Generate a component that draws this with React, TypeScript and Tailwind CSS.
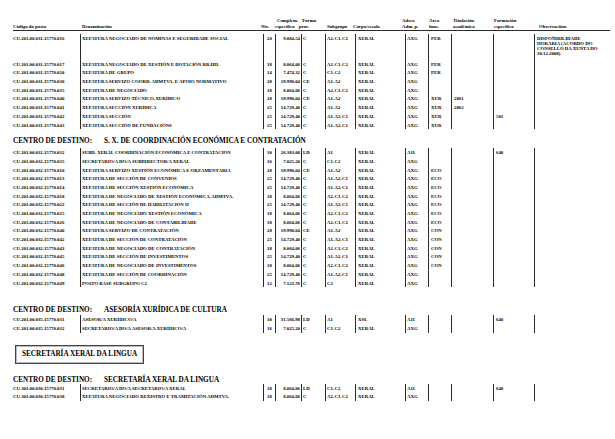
type Row = {
  code: string
  name: string
  niv: string
  comp: string
  forma: string
  sub: string
  corpo: string
  adscr: string
  area?: string
  tit?: string
  form?: string
  obs?: string[]
}

const block1: Row[] = [
  { code: "CU.201.00.031.15770.016", name: "XEFATURA NEGOCIADO DE NÓMINAS E SEGURIDADE SOCIAL", niv: "20", comp: "9.084,54", forma: "C", sub: "A2-C1-C2", corpo: "XERAL", adscr: "AXG", area: "PER", obs: ["DISPOÑIBILIDADE", "HORARIA (ACORDO DO", "CONSELLO DA XUNTA DO", "30.12.2008)."] },
  { code: "CU.201.00.031.15770.017", name: "XEFATURA NEGOCIADO DE XESTIÓN E DOTACIÓN RR.HH.", niv: "18", comp: "8.064,06", forma: "C", sub: "A2-C1-C2", corpo: "XERAL", adscr: "AXG", area: "PER" },
  { code: "CU.201.00.031.15770.020", name: "XEFATURA DE GRUPO", niv: "14", comp: "7.474,32", forma: "C", sub: "C1-C2", corpo: "XERAL", adscr: "AXG", area: "PER" },
  { code: "CU.201.00.031.15770.030", name: "XEFATURA SERVIZO COORD. ADMTVA. E APOIO NORMATIVO", niv: "28", comp: "19.990,04", forma: "CE", sub: "A1-A2", corpo: "XERAL", adscr: "AXG" },
  { code: "CU.201.00.031.15770.035", name: "XEFATURA DE NEGOCIADO", niv: "18", comp: "8.064,06", forma: "C", sub: "A2-C1-C2", corpo: "XERAL", adscr: "AXG" },
  { code: "CU.201.00.031.15770.040", name: "XEFATURA SERVIZO TÉCNICO-XURÍDICO", niv: "28", comp: "19.990,04", forma: "CE", sub: "A1-A2", corpo: "XERAL", adscr: "AXG", area: "XUR", tit: "2061" },
  { code: "CU.201.00.031.15770.041", name: "XEFATURA SECCIÓN XURÍDICA", niv: "25", comp: "14.729,40", forma: "C", sub: "A1-A2", corpo: "XERAL", adscr: "AXG", area: "XUR", tit: "2062" },
  { code: "CU.201.00.031.15770.042", name: "XEFATURA SECCIÓN", niv: "25", comp: "14.729,40", forma: "C", sub: "A1-A2-C1", corpo: "XERAL", adscr: "AXG", area: "XUR", form: "501" },
  { code: "CU.201.00.031.15770.043", name: "XEFATURA SECCIÓN DE FUNDACIÓNS", niv: "25", comp: "14.729,40", forma: "C", sub: "A1-A2-C1", corpo: "XERAL", adscr: "AXG", area: "XUR" },
]

const block2: Row[] = [
  { code: "CU.201.00.032.15770.032", name: "SUBD. XERAL COORDINACIÓN ECONÓMICA E CONTRATACIÓN", niv: "30", comp: "26.383,08", forma: "LD", sub: "A1", corpo: "XERAL", adscr: "A11", form: "640" },
  { code: "CU.201.00.032.15770.035", name: "SECRETARIO/A DO/A SUBDIRECTOR/A XERAL", niv: "16", comp: "7.025,20", forma: "C", sub: "C1-C2", corpo: "XERAL", adscr: "AXG" },
  { code: "CU.201.00.032.15770.010", name: "XEFATURA SERVIZO XESTIÓN ECONÓMICA E ORZAMENTARIA", niv: "28", comp: "19.990,04", forma: "CE", sub: "A1-A2", corpo: "XERAL", adscr: "AXG", area: "ECO" },
  { code: "CU.201.00.032.15770.013", name: "XEFATURA DE SECCIÓN DE CONVENIOS", niv: "25", comp: "14.729,40", forma: "C", sub: "A1-A2-C1", corpo: "XERAL", adscr: "AXG", area: "ECO" },
  { code: "CU.201.00.032.15770.014", name: "XEFATURA DE SECCIÓN XESTIÓN ECONÓMICA", niv: "25", comp: "14.729,40", forma: "C", sub: "A1-A2-C1", corpo: "XERAL", adscr: "AXG", area: "ECO" },
  { code: "CU.201.00.032.15770.018", name: "XEFATURA DE NEGOCIADO DE XESTIÓN ECONÓMICA-ADMTVA.", niv: "18", comp: "8.064,06", forma: "C", sub: "A2-C1-C2", corpo: "XERAL", adscr: "AXG", area: "ECO" },
  { code: "CU.201.00.032.15770.022", name: "XEFATURA DE SECCIÓN DE HABILITACIÓN II", niv: "25", comp: "14.729,40", forma: "C", sub: "A1-A2-C1", corpo: "XERAL", adscr: "AXG", area: "ECO" },
  { code: "CU.201.00.032.15770.025", name: "XEFATURA DE NEGOCIADO XESTIÓN ECONÓMICA", niv: "18", comp: "8.064,06", forma: "C", sub: "A2-C1-C2", corpo: "XERAL", adscr: "AXG", area: "ECO" },
  { code: "CU.201.00.032.15770.026", name: "XEFATURA DE NEGOCIADO DE CONTABILIDADE", niv: "18", comp: "8.064,06", forma: "C", sub: "A2-C1-C2", corpo: "XERAL", adscr: "AXG", area: "ECO" },
  { code: "CU.201.00.032.15770.040", name: "XEFATURA SERVIZO DE CONTRATACIÓN", niv: "28", comp: "19.990,04", forma: "CE", sub: "A1-A2", corpo: "XERAL", adscr: "AXG", area: "CON" },
  { code: "CU.201.00.032.15770.042", name: "XEFATURA DE SECCIÓN DE CONTRATACIÓN", niv: "25", comp: "14.729,40", forma: "C", sub: "A1-A2-C1", corpo: "XERAL", adscr: "AXG", area: "CON" },
  { code: "CU.201.00.032.15770.043", name: "XEFATURA DE NEGOCIADO DE CONTRATACIÓN", niv: "18", comp: "8.064,06", forma: "C", sub: "A2-C1-C2", corpo: "XERAL", adscr: "AXG", area: "CON" },
  { code: "CU.201.00.032.15770.045", name: "XEFATURA DE SECCIÓN DE INVESTIMENTOS", niv: "25", comp: "14.729,40", forma: "C", sub: "A1-A2-C1", corpo: "XERAL", adscr: "AXG", area: "CON" },
  { code: "CU.201.00.032.15770.046", name: "XEFATURA DE NEGOCIADO DE INVESTIMENTOS", niv: "18", comp: "8.064,06", forma: "C", sub: "A2-C1-C2", corpo: "XERAL", adscr: "AXG", area: "CON" },
  { code: "CU.201.00.032.15770.048", name: "XEFATURA DE SECCIÓN DE COORDINACIÓN", niv: "25", comp: "14.729,40", forma: "C", sub: "A1-A2-C1", corpo: "XERAL", adscr: "AXG" },
  { code: "CU.201.00.032.15770.049", name: "POSTO BASE SUBGRUPO C2", niv: "12", comp: "7.123,76", forma: "C", sub: "C2", corpo: "XERAL", adscr: "AXG" },
]

const block3: Row[] = [
  { code: "CU.201.00.035.15770.031", name: "ASESOR/A XURÍDICO/A", niv: "30", comp: "31.566,98", forma: "LD", sub: "A1", corpo: "XSL", adscr: "A11", form: "640" },
  { code: "CU.201.00.035.15770.032", name: "SECRETARIO/A DO/A ASESOR/A XURÍDICO/A", niv: "16", comp: "7.025,20", forma: "C", sub: "C1-C2", corpo: "XERAL", adscr: "AXG" },
]

const block4: Row[] = [
  { code: "CU.301.00.030.15770.031", name: "SECRETARIO/A DO/A SECRETARIO/A XERAL", niv: "18", comp: "8.064,06", forma: "LD", sub: "C1-C2", corpo: "XERAL", adscr: "A11", form: "640" },
  { code: "CU.301.00.030.15770.038", name: "XEFATURA NEGOCIADO REXISTRO E TRAMITACIÓN ADMTVA.", niv: "18", comp: "8.064,06", forma: "C", sub: "A2-C1-C2", corpo: "XERAL", adscr: "AXG" },
]

const cols = "grid grid-cols-[67px_183px_12px_26px_24px_30px_50px_23px_23px_42px_41px_76px]"
const cell = "py-[1.85px] leading-[5px] whitespace-nowrap"
const line = "border-l border-[#2a2a2a]"

function Block({ rows }: { rows: Row[] }) {
  return (
    <div className={`${cols} text-[4.8px]`}>
      {rows.map((r) => (
        <div key={r.code} className="contents">
          <div className={cell}>{r.code}</div>
          <div className={`${cell} ${line} pl-[1px]`}>{r.name}</div>
          <div className={`${cell} ${line} text-center`}>{r.niv}</div>
          <div className={`${cell} ${line} text-right pr-[1px]`}>{r.comp}</div>
          <div className={`${cell} ${line} pl-[1px]`}>{r.forma}</div>
          <div className={`${cell} ${line} pl-[1px]`}>{r.sub}</div>
          <div className={`${cell} ${line} pl-[2px]`}>{r.corpo}</div>
          <div className={`${cell} ${line} pl-[1px]`}>{r.adscr}</div>
          <div className={`${cell} ${line} pl-[2px]`}>{r.area}</div>
          <div className={`${cell} ${line} pl-[2px]`}>{r.tit}</div>
          <div className={`${cell} ${line} pl-[2px]`}>{r.form}</div>
          <div className={`${cell} ${line} pl-[2px] ${r.obs ? "pb-[4px] leading-[4.8px]" : ""}`}>
            {r.obs?.map((o) => (
              <div key={o}>{o}</div>
            ))}
          </div>
        </div>
      ))}
    </div>
  )
}

function Centro({ name }: { name: string }) {
  return (
    <div className="flex text-[7.2px] leading-[8px]">
      <span className="w-[91px]">CENTRO DE DESTINO:</span>
      <span>{name}</span>
    </div>
  )
}

export default function App() {
  return (
    <div
      className="min-h-screen bg-white pl-[13px] pr-[5px] pt-[18px] font-bold text-black font-['Liberation_Serif',serif]"
      style={{ fontFamily: '"Liberation Serif", "Times New Roman", serif' }}
    >
      <div className={`${cols} border-b border-[#2a2a2a] pb-[1px] text-[4.8px] leading-[5.5px] w-[597px]`}>
        <div className="self-end">Código do posto</div>
        <div className="self-end pl-[2px]">Denominación</div>
        <div className="self-end -ml-[2px] whitespace-nowrap">Nív.</div>
        <div className="col-span-2 whitespace-nowrap">
          <div className="flex">
            <span className="ml-[2px]">Complem.</span>
            <span className="ml-[4px]">Forma</span>
          </div>
          <div className="flex">
            <span>específico</span>
            <span className="ml-[4px]">prov.</span>
          </div>
        </div>
        <div className="self-end pl-[2px]">Subgrupo</div>
        <div className="self-end -ml-[2px]">Corpo/escala</div>
        <div className="-ml-[3px] whitespace-nowrap">
          <div>Adscr.</div>
          <div>Adm. p.</div>
        </div>
        <div className="pl-[1px]">
          <div>Área</div>
          <div>func.</div>
        </div>
        <div className="pl-[2px]">
          <div>Titulación</div>
          <div>académica</div>
        </div>
        <div className="pl-[1px]">
          <div>Formación</div>
          <div>específica</div>
        </div>
        <div className="self-end pl-[5px]">Observacións</div>
      </div>

      <div className="mt-[3px]">
        <Block rows={block1} />
      </div>

      <div className="mt-[8px] mb-[3px]">
        <Centro name="S. X. DE COORDINACIÓN ECONÓMICA E CONTRATACIÓN" />
      </div>
      <Block rows={block2} />

      <div className="mt-[19px] mb-[1px]">
        <Centro name="ASESORÍA XURÍDICA DE CULTURA" />
      </div>
      <Block rows={block3} />

      <div className="mt-[12px] ml-[2px] inline-block border border-[#444] shadow-[inset_0_0_0_1px_#bbb] px-[6px] py-[4px] text-[7.2px] leading-[9px]">
        SECRETARÍA XERAL DA LINGUA
      </div>

      <div className="mt-[12px]">
        <Centro name="SECRETARÍA XERAL DA LINGUA" />
      </div>
      <Block rows={block4} />
    </div>
  )
}
